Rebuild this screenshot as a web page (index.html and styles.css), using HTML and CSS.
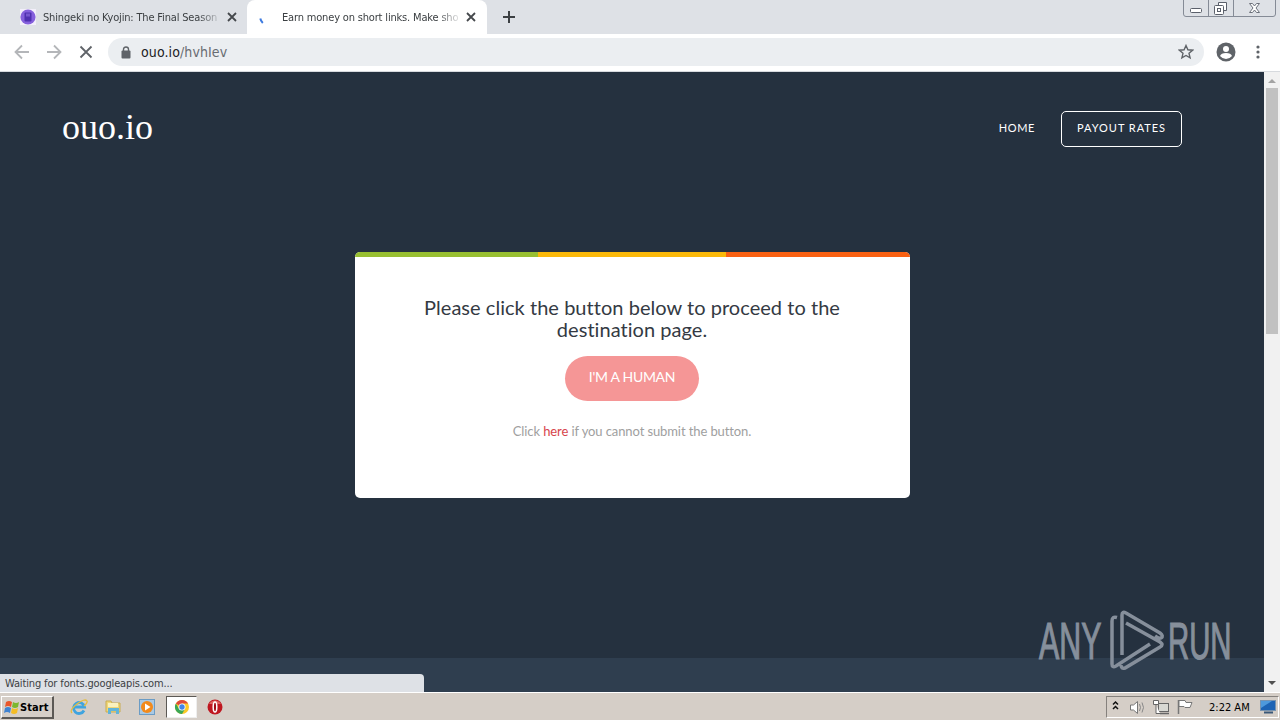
FILE: index.html
```html
<!DOCTYPE html>
<html lang="en">
<head>
    <meta charset="UTF-8">
    <meta name="viewport" content="width=device-width, initial-scale=1.0">
    <title>Earn money on short links. Make short links</title>
    <link rel="stylesheet" href="styles.css">
</head>
<body>

<!-- Tab strip -->
<div class="tabstrip">
    <div class="tab">
        <svg class="favicon" width="16" height="16" viewBox="0 0 16 16"><rect width="16" height="16" fill="#f3effb"/><circle cx="8" cy="8" r="7.6" fill="#8560dc"/><rect x="4.5" y="3.500" width="7" height="9" rx="1" fill="#4f30b0"/><path d="M6 4.500h4v3H6z" fill="#7656cf"/></svg>
        <span class="tab-title">Shingeki no Kyojin: The Final Season</span>
        <svg class="tab-close" width="10" height="10" viewBox="0 0 10 10"><path d="M1 1l8 8M9 1L1 9"/></svg>
    </div>
    <div class="tab active">
        <svg class="favicon" width="16" height="16" viewBox="0 0 16 16"><path d="M2.300 9.500Q2.800 12 4.800 14" fill="none" stroke="#3e7be0" stroke-width="2"/></svg>
        <span class="tab-title">Earn money on short links. Make sho</span>
        <svg class="tab-close" width="10" height="10" viewBox="0 0 10 10"><path d="M1 1l8 8M9 1L1 9"/></svg>
    </div>
    <svg class="new-tab" width="12" height="12" viewBox="0 0 12 12"><path d="M6 0v12M0 6h12" stroke="#3c4043" stroke-width="2"/></svg>
    <svg class="window-buttons" width="94" height="18" viewBox="0 0 94 18" fill="none">
        <path d="M.5 0v14q0 2.500 2.500 2.500h87q2.500 0 2.500-2.500V0M25.500 0v16M50.500 0v16" stroke="#858b96"/>
        <rect x="7.500" y="8.500" width="11" height="4" rx="1" fill="#fff" stroke="#5b606b"/>
        <path d="M35.500 5V2.500h8v8H41" fill="#fff" stroke="#5b606b"/>
        <rect x="31.500" y="5.500" width="9" height="9" rx="1" fill="#fff" stroke="#5b606b"/>
        <rect x="34.500" y="8.500" width="3" height="3" stroke="#5b606b"/>
        <path d="M66.500 3.500h3l2 2.500 2-2.500h3l-3.500 4.500 3.500 4.500h-3l-2-2.500-2 2.500h-3L70 8z" fill="#fff" stroke="#6c717b"/>
    </svg>
</div>

<!-- Toolbar -->
<div class="toolbar">
    <svg class="nav-icons" width="80" height="16" viewBox="0 0 80 16" fill="none" stroke-width="1.800">
        <path d="M15 8H2M8 1.500L1.500 8 8 14.500M33 8h13M40 1.500L46.500 8 40 14.500" stroke="#b4b6b9"/>
        <path d="M66.500 2.500l11 11M77.500 2.500l-11 11" stroke="#5f6368"/>
    </svg>
    <div class="omnibox">
        <svg class="lock" width="10" height="13" viewBox="0 0 10 13"><rect x=".5" y="4.500" width="9" height="8" rx="1" fill="#5f6368"/><path d="M2.500 5V3.200a2.500 2.200 0 0 1 5 0V5" fill="none" stroke="#5f6368" stroke-width="1.400"/></svg>
        <span class="url">ouo.io<span>/hvhIev</span></span>
        <svg class="star" width="16" height="16" viewBox="0 0 16 16"><path d="M8 1.500l1.900 4.300 4.700.4-3.600 3.100 1.100 4.600L8 11.500l-4.100 2.400L5 9.300 1.400 6.200l4.700-.4z" fill="none" stroke="#5f6368" stroke-width="1.400"/></svg>
    </div>
    <svg class="profile" width="20" height="20" viewBox="0 0 20 20"><circle cx="10" cy="10" r="9.500" fill="#5f6368"/><circle cx="10" cy="7" r="3" fill="#fff"/><path d="M4 14q1-3 6-3t6 3q-2.500 3-6 3t-6-3" fill="#fff"/></svg>
    <svg class="menu" width="4" height="14" viewBox="0 0 4 14" fill="#5f6368"><circle cx="2" cy="2" r="1.600"/><circle cx="2" cy="7" r="1.600"/><circle cx="2" cy="12" r="1.600"/></svg>
</div>

<!-- Page -->
<div class="viewport">
    <div class="page">
        <header>
            <a class="logo">ouo.io</a>
            <nav>
                <a class="home">HOME</a>
                <a class="payout">PAYOUT RATES</a>
            </nav>
        </header>
        <main class="card">
            <div class="stripe"><i class="green"></i><i class="yellow"></i><i class="orange"></i></div>
            <h1>Please click the button below to proceed to the<br>destination page.</h1>
            <button class="human">I'M A HUMAN</button>
            <p>Click <a>here</a> if you cannot submit the button.</p>
        </main>
        <footer></footer>
        <div class="status">Waiting for fonts.googleapis.com...</div>
        <svg class="watermark" width="226" height="64" viewBox="0 0 226 64">
            <g class="watermark-text">
                <text transform="translate(1 50.500) scale(.595 1)">ANY</text>
                <text transform="translate(130 50.500) scale(.575 1)">RUN</text>
            </g>
            <path d="M79 9.500Q74 8 74 13V56Q74 60 78 58L112 36M84 47V7Q84 3 88 5L122 25Q126 28 123 30Q121 31 117 28M88 15L122 34Q126 37 122 39L87 60Q83 61 83 57" fill="none" stroke="#868f9b" stroke-width="3.500"/>
        </svg>
    </div>
    <div class="scrollbar">
        <i class="arrow-up"></i>
        <i class="thumb"></i>
        <i class="arrow-down"></i>
    </div>
</div>

<!-- Taskbar -->
<div class="taskbar">
    <div class="start">
        <svg width="16" height="16" viewBox="0 0 16 16"><path d="M2 3q3-2 6 0L7 8Q4 6 1 8z" fill="#e9562a"/><path d="M9 3q3 2 6 0l-1 5q-3 2-6 0z" fill="#7db72f"/><path d="M1 9q3-2 6 0l-1 5q-3-2-6 0z" fill="#3f83d1"/><path d="M8 9q3 2 6 0l-1 5q-3 2-6 0z" fill="#f5bd25"/></svg>
        <span>Start</span>
    </div>
    <div class="launchers">
        <svg width="18" height="18" viewBox="0 0 18 18" fill="none"><path d="M14 12.500A5.500 5.500 0 1 1 14.500 9H5" stroke="#3fa4df" stroke-width="2.800"/><path d="M2 15Q-1 12 7 6t10-3q1 2-3 5" stroke="#e5bd40" stroke-width="1.300"/></svg>
        <svg width="18" height="18" viewBox="0 0 18 18"><path d="M2 3h5l1 2h8v9H2z" fill="#efd779" stroke="#c9ac52"/><path d="M4 5h10v4H4z" fill="#fbf1bd"/><path d="M4 16v-6h11v6h-3v-3H7v3z" fill="#62b4d9"/></svg>
        <svg width="18" height="18" viewBox="0 0 18 18"><rect x="1.500" y="1.500" width="15" height="15" fill="#a9c9e4" stroke="#6b9cc5"/><circle cx="9" cy="9" r="6" fill="#f28a1c"/><path d="M7 5.500v7L12.500 9z" fill="#fff"/></svg>
        <div class="task-active">
            <svg width="16" height="16" viewBox="0 0 16 16"><circle cx="8" cy="8" r="7" fill="#fbc928"/><path d="M8 8L1.900 4.500A7 7 0 0 1 14.100 4.500H8z" fill="#df4a3c"/><path d="M1.900 4.500A7 7 0 0 0 8 15l3-5H5z" fill="#3aa757"/><circle cx="8" cy="8" r="3.500" fill="#fff"/><circle cx="8" cy="8" r="2.700" fill="#4285e8"/></svg>
        </div>
        <svg width="18" height="18" viewBox="0 0 18 18"><circle cx="9" cy="9" r="7.500" fill="#bf1720"/><path d="M3 6a7 7 0 0 1 12 0z" fill="#df6461"/><ellipse cx="9" cy="9" rx="1.800" ry="5" fill="#a00c15" stroke="#fff" stroke-width="1.500"/></svg>
    </div>
    <div class="tray">
        <svg width="90" height="18" viewBox="0 0 90 18" fill="none">
            <path d="M6 6.500L8.500 4 11 6.500M6 11l2.500-2.500L11 11" stroke="#111" stroke-width="1.500"/>
            <path d="M23.500 7v5h3l4 3.500v-12l-4 3.500z" fill="#fff" stroke="#777"/><path d="M32.500 6q2 3.500 0 7M35 4.500q3 5 0 10" stroke="#888"/>
            <rect x="51.500" y="5.500" width="10" height="8" fill="#d8d8d3" stroke="#666"/><path d="M53 15.500h9" stroke="#666" stroke-width="1.500"/><path d="M46.500 2.500h5v4h-5zM49 6.500v9h4" fill="#fff" stroke="#666"/>
            <path d="M71.500 2v14" stroke="#777" stroke-width="1.500"/><path d="M72 2.500h6l1 2h6l-2 5h-5l-1-1h-5z" fill="#fff" stroke="#777"/>
        </svg>
        <span class="clock">2:22 AM</span>
        <svg width="16" height="14" viewBox="0 0 16 14"><rect x=".5" y=".5" width="15" height="10" fill="#1d63b4" stroke="#7793b0"/><path d="M1 1h11L1 8z" fill="#4e99dc"/><path d="M4 12.500h9" stroke="#3a5878" stroke-width="2"/></svg>
    </div>
</div>

</body>
</html>
```

FILE: styles.css
```css
* {
    box-sizing: border-box;
}
body {
    margin: 0;
    width: 1280px;
    height: 720px;
    overflow: hidden;
    display: flex;
    flex-direction: column;
    font-family: "DejaVu Sans Condensed", "DejaVu Sans", sans-serif;
    font-size: 11px;
}
svg {
    display: block;
    flex: none;
}
.tabstrip {
    height: 34px;
    flex: none;
    display: flex;
    background: #dee1e6;
}
.tab {
    width: 247px;
    height: 34px;
    padding-left: 20px;
    display: flex;
    align-items: center;
}
.tab.active {
    width: 240px;
    padding-left: 11px;
    background: #fff;
    border-radius: 8px 8px 0 0;
}
.favicon {
    margin-right: 7px;
}
.active .favicon {
    margin-right: 8px;
}
.tab-title {
    width: 176px;
    overflow: hidden;
    white-space: nowrap;
    letter-spacing: -0.17px;
    color: #3c4043;
    -webkit-mask-image: linear-gradient(90deg, #000 155px, transparent 180px);
    mask-image: linear-gradient(90deg, #000 155px, transparent 180px);
}
.tab-close {
    margin-left: 8px;
}
.tab-close path {
    stroke: #45484c;
    stroke-width: 1.8;
}
.new-tab {
    margin: 11px 0 0 16px;
}
.window-buttons {
    margin-left: auto;
    margin-right: 3px;
}
.toolbar {
    height: 38px;
    flex: none;
    padding-bottom: 1px;
    display: flex;
    align-items: center;
    background: #fff;
    border-bottom: 1px solid #d7dade;
}
.nav-icons {
    margin-left: 14px;
}
.omnibox {
    width: 1096px;
    height: 28px;
    margin-left: 14px;
    padding: 0 10px 0 13px;
    display: flex;
    align-items: center;
    border-radius: 14px;
    background: #ebeef1;
}
.url {
    margin-left: 10px;
    font-size: 14px;
    letter-spacing: 0.1px;
    color: #202124;
}
.url span {
    color: #686c71;
}
.star {
    margin-left: auto;
}
.profile {
    margin-left: 12px;
}
.menu {
    margin-left: 20px;
}
.viewport {
    height: 620px;
    flex: none;
    display: flex;
}
.page {
    width: 1264px;
    position: relative;
    display: flex;
    flex-direction: column;
    align-items: center;
    background: #25313f;
    font-family: Lato, sans-serif;
    font-variant-ligatures: none;
}
header {
    width: 100%;
    height: 180px;
    padding: 39px 82px 0 62px;
    display: flex;
    justify-content: space-between;
}
.logo {
    font-family: "Liberation Serif", serif;
    font-size: 36px;
    line-height: 32px;
    color: #fff;
}
nav {
    height: 36px;
    display: flex;
    align-items: center;
    gap: 26px;
    color: #fff;
    font-size: 11px;
    letter-spacing: 0.95px;
}
.home {
    line-height: 32px;
    padding-bottom: 2px;
    letter-spacing: 0.6px;
}
.payout {
    width: 121px;
    height: 36px;
    line-height: 32px;
    text-align: center;
    border: 1px solid #fff;
    border-radius: 5px;
}
.card {
    width: 555px;
    height: 246px;
    overflow: hidden;
    display: flex;
    flex-direction: column;
    align-items: center;
    background: #fff;
    border-radius: 5px;
}
.stripe {
    width: 555px;
    height: 5px;
    display: grid;
    grid-template-columns: 183px 188px 184px;
}
.green {
    background: #98bf31;
}
.yellow {
    background: #fbb90a;
}
.orange {
    background: #fa6112;
}
h1 {
    margin: 39px 0 0;
    font-size: 20px;
    font-weight: 400;
    line-height: 22px;
    letter-spacing: 0.04px;
    text-align: center;
    white-space: nowrap;
    color: #343a43;
}
.human {
    width: 134px;
    height: 45px;
    margin-top: 16px;
    padding: 0 0 4px;
    border: 0;
    border-radius: 23px;
    background: #f59696;
    color: #fff;
    font: 14px Lato, sans-serif;
    letter-spacing: -0.3px;
}
.card p {
    margin: 20px 0 0;
    font-size: 13px;
    line-height: 20px;
    letter-spacing: -0.1px;
    color: #a0a0a0;
}
.card p a {
    color: #d7444b;
}
footer {
    width: 100%;
    height: 34px;
    margin-top: auto;
    background: #2f3e4f;
}
.status {
    position: absolute;
    left: 0;
    bottom: 0;
    width: 424px;
    height: 18px;
    padding-left: 5px;
    line-height: 19px;
    background: #dee1e6;
    border-radius: 0 4px 0 0;
    font-family: "DejaVu Sans Condensed", "DejaVu Sans", sans-serif;
    letter-spacing: -0.14px;
    color: #3c4043;
}
.watermark {
    position: absolute;
    right: 0;
    bottom: 20px;
}
.watermark-text {
    font: 51px "Liberation Sans", sans-serif;
    fill: #868f9b;
    stroke: #868f9b;
    stroke-width: 1.2px;
}
.scrollbar {
    width: 16px;
    padding: 7px 0 7px;
    display: flex;
    flex-direction: column;
    align-items: center;
    background: #f1f1f1;
}
.arrow-up {
    border: 4px solid transparent;
    border-top: 0;
    border-bottom-color: #a3a3a3;
}
.thumb {
    width: 12px;
    height: 246px;
    margin-top: 5px;
    background: #c1c1c1;
}
.arrow-down {
    margin-top: auto;
    border: 4px solid transparent;
    border-bottom: 0;
    border-top-color: #505050;
}
.taskbar {
    height: 28px;
    flex: none;
    padding-top: 2px;
    display: flex;
    background: #d5cec7;
    border-top: 1px solid #fff;
}
.start {
    width: 53px;
    height: 23px;
    margin: 1px 0 0 1px;
    padding-left: 2px;
    display: flex;
    align-items: center;
    border: 1px solid #fff;
    border-right: 2px solid #5c5955;
    border-bottom: 2px solid #5c5955;
    font-weight: bold;
    letter-spacing: 0.1px;
}
.launchers {
    height: 24px;
    margin-left: 16px;
    display: flex;
    align-items: center;
    gap: 16px;
}
.task-active {
    width: 31px;
    height: 22px;
    margin: 0 -7px 0 -6px;
    display: flex;
    align-items: center;
    justify-content: center;
    background: #fff;
    border: 1px solid #5c5955;
    border-right-color: #eee;
    border-bottom-color: #eee;
}
.tray {
    width: 173px;
    height: 22px;
    margin: 1px 1px 0 auto;
    display: flex;
    align-items: center;
    border: 1px solid #85817d;
    border-right-color: #fff;
    border-bottom-color: #fff;
}
.clock {
    width: 51px;
    margin-left: 12px;
    white-space: nowrap;
}
```
